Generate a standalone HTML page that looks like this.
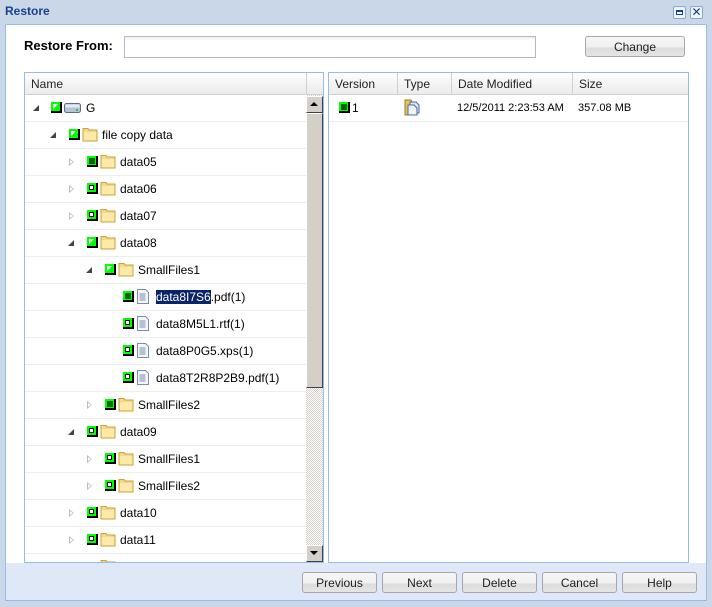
<!DOCTYPE html>
<html><head><meta charset="utf-8"><style>
*{box-sizing:border-box;margin:0;padding:0}
body{width:712px;height:607px;position:relative;background:#c9d7e8;font-family:"Liberation Sans",Tahoma,sans-serif;font-size:12px;overflow:hidden}
.abs{position:absolute}
.title{left:5px;top:4px;font-weight:bold;color:#15428b;font-size:12px}
.frame{left:5px;top:24px;width:702px;height:577px;border:1px solid #99bbe8;background:#fff}
.bottom{left:6px;top:563px;width:700px;height:37px;background:#dfe8f6}
.btn{position:absolute;height:21px;border:1px solid #a7a7a7;border-radius:3px;background:linear-gradient(#f6f6f6 0,#f0f0f0 55%,#dcdcdc 56%,#e4e4e4 100%);text-align:center;line-height:21px;color:#222;font-size:12px}
.input{left:124px;top:36px;width:412px;height:22px;border:1px solid #b5b8c8;background:linear-gradient(#eee,#fff 4px)}
.panel{border:1px solid #99bbe8;background:#fff;overflow:hidden}
.hdr{position:absolute;left:0;top:0;height:22px;background:linear-gradient(#fff,#f2f2f2 60%,#ececec);border-bottom:1px solid #d0d0d0;width:100%}
.hc{position:absolute;top:0;height:22px;line-height:22px;padding-left:6px;border-right:1px solid #d0d0d0;color:#222}
.row{position:absolute;left:0;width:281px;height:27px;border-bottom:1px solid #ededed}
.row span{position:absolute;top:0;line-height:26px;font-size:12px;color:#000;white-space:nowrap}
.arr{position:absolute;width:0;height:0}
.ao{top:9px;border-left:5px solid #bbb;border-top:4px solid transparent;border-bottom:4px solid transparent}
.ao:after{content:"";position:absolute;left:-4px;top:-2px;border-left:3px solid #fff;border-top:2px solid transparent;border-bottom:2px solid transparent}
.ae{top:10px;border-right:6px solid #444;border-top:6px solid transparent}
.cb{position:absolute;top:7px;width:11px;height:11px;background:#000}
.cb i{position:absolute;left:0;top:0;width:9px;height:9px;background:#0f0;display:block}
.cb.f i b{position:absolute;left:2px;top:2px;width:6px;height:6px;background:#006400;display:block}
.cb.e i b{position:absolute;left:2px;top:2px;width:5px;height:5px;background:#fff;border:1px solid #000;display:block}
.cb.h i b{position:absolute;left:2px;top:2px;width:0;height:0;border-top:5px solid #fff;border-right:5px solid transparent;display:block}
.ic{position:absolute;top:5px}
</style></head><body>
<svg width="0" height="0" style="position:absolute"><defs>
<symbol id="fold" viewBox="0 0 17 15"><path d="M1 3V1.5h5l1 1.5h8v11H1z" fill="#f5d889" stroke="#c9a03a"/><path d="M1.5 5h13v8.5h-13z" fill="#fde9a8"/></symbol>
<symbol id="file" viewBox="0 0 12 15"><path d="M.5 .5h8l3 3v11H.5z" fill="#f4f6fb" stroke="#7d8bae"/><path d="M2.5 5h6M2.5 7h6M2.5 9h6M2.5 11h6" stroke="#7d8bae"/></symbol>
</defs></svg>
<div class="abs title">Restore</div>
<div class="abs" style="left:673px;top:6px;width:13px;height:13px;border:1px solid #8aa8cf;background:#eef3fa;border-radius:2px"><div style="position:absolute;left:2px;top:3px;width:7px;height:5px;border:1px solid #15428b;border-top-width:2px"></div></div>
<div class="abs" style="left:690px;top:6px;width:13px;height:13px;border:1px solid #8aa8cf;background:#eef3fa;border-radius:2px;color:#15428b;font-size:12px;line-height:11px;text-align:center">✕</div>
<div class="abs frame"></div>
<div class="abs bottom"></div>
<div class="abs" style="left:24px;top:38px;font-weight:bold;font-size:13px;color:#000">Restore From:</div>
<div class="abs input"></div>
<div class="btn" style="left:585px;top:36px;width:100px">Change</div>

<div class="abs panel" style="left:24px;top:72px;width:300px;height:491px">
 <div class="hdr"><div class="hc" style="left:0;width:282px">Name</div></div>
 <div style="position:absolute;left:0;top:22px;width:300px;height:468px">
  <div class="row" style="top:0"><div class="arr ae" style="left:8px"></div><div class="cb h" style="left:26px"><i><b></b></i></div>
   <svg class="ic" style="left:39px;top:8px" width="17" height="10" viewBox="0 0 17 10"><rect x=".5" y=".5" width="16" height="9" rx="2" fill="#b6c3d8" stroke="#5a6a86"/><rect x="1.5" y="1.5" width="14" height="3" fill="#e4eaf3"/><rect x="12" y="6" width="2" height="2" fill="#2c2"/></svg>
   <span style="left:61px">G</span></div>
  <div class="row" style="top:27px"><div class="arr ae" style="left:25px"></div><div class="cb h" style="left:44px"><i><b></b></i></div><svg class="ic" style="left:57px" width="17" height="15"><use href="#fold"/></svg><span style="left:77px">file copy data</span></div>
  <div class="row" style="top:54px"><div class="arr ao" style="left:44px"></div><div class="cb f" style="left:62px"><i><b></b></i></div><svg class="ic" style="left:75px" width="17" height="15"><use href="#fold"/></svg><span style="left:95px">data05</span></div>
  <div class="row" style="top:81px"><div class="arr ao" style="left:44px"></div><div class="cb e" style="left:62px"><i><b></b></i></div><svg class="ic" style="left:75px" width="17" height="15"><use href="#fold"/></svg><span style="left:95px">data06</span></div>
  <div class="row" style="top:108px"><div class="arr ao" style="left:44px"></div><div class="cb e" style="left:62px"><i><b></b></i></div><svg class="ic" style="left:75px" width="17" height="15"><use href="#fold"/></svg><span style="left:95px">data07</span></div>
  <div class="row" style="top:135px"><div class="arr ae" style="left:43px"></div><div class="cb h" style="left:62px"><i><b></b></i></div><svg class="ic" style="left:75px" width="17" height="15"><use href="#fold"/></svg><span style="left:95px">data08</span></div>
  <div class="row" style="top:162px"><div class="arr ae" style="left:61px"></div><div class="cb h" style="left:80px"><i><b></b></i></div><svg class="ic" style="left:93px" width="17" height="15"><use href="#fold"/></svg><span style="left:113px">SmallFiles1</span></div>
  <div class="row" style="top:189px"><div class="cb f" style="left:98px"><i><b></b></i></div><svg class="ic" style="left:112px" width="12" height="15"><use href="#file"/></svg><span style="left:131px"><b style="font-weight:normal;background:#0a246a;color:#fff">data8I7S6</b>.pdf(1)</span></div>
  <div class="row" style="top:216px"><div class="cb e" style="left:98px"><i><b></b></i></div><svg class="ic" style="left:112px" width="12" height="15"><use href="#file"/></svg><span style="left:131px">data8M5L1.rtf(1)</span></div>
  <div class="row" style="top:243px"><div class="cb e" style="left:98px"><i><b></b></i></div><svg class="ic" style="left:112px" width="12" height="15"><use href="#file"/></svg><span style="left:131px">data8P0G5.xps(1)</span></div>
  <div class="row" style="top:270px"><div class="cb e" style="left:98px"><i><b></b></i></div><svg class="ic" style="left:112px" width="12" height="15"><use href="#file"/></svg><span style="left:131px">data8T2R8P2B9.pdf(1)</span></div>
  <div class="row" style="top:297px"><div class="arr ao" style="left:62px"></div><div class="cb f" style="left:80px"><i><b></b></i></div><svg class="ic" style="left:93px" width="17" height="15"><use href="#fold"/></svg><span style="left:113px">SmallFiles2</span></div>
  <div class="row" style="top:324px"><div class="arr ae" style="left:43px"></div><div class="cb e" style="left:62px"><i><b></b></i></div><svg class="ic" style="left:75px" width="17" height="15"><use href="#fold"/></svg><span style="left:95px">data09</span></div>
  <div class="row" style="top:351px"><div class="arr ao" style="left:62px"></div><div class="cb e" style="left:80px"><i><b></b></i></div><svg class="ic" style="left:93px" width="17" height="15"><use href="#fold"/></svg><span style="left:113px">SmallFiles1</span></div>
  <div class="row" style="top:378px"><div class="arr ao" style="left:62px"></div><div class="cb e" style="left:80px"><i><b></b></i></div><svg class="ic" style="left:93px" width="17" height="15"><use href="#fold"/></svg><span style="left:113px">SmallFiles2</span></div>
  <div class="row" style="top:405px"><div class="arr ao" style="left:44px"></div><div class="cb e" style="left:62px"><i><b></b></i></div><svg class="ic" style="left:75px" width="17" height="15"><use href="#fold"/></svg><span style="left:95px">data10</span></div>
  <div class="row" style="top:432px"><div class="arr ao" style="left:44px"></div><div class="cb e" style="left:62px"><i><b></b></i></div><svg class="ic" style="left:75px" width="17" height="15"><use href="#fold"/></svg><span style="left:95px">data11</span></div>
  <div class="row" style="top:459px;border:none"><svg class="ic" style="left:75px" width="17" height="15"><use href="#fold"/></svg></div>
 </div>
 <div style="position:absolute;left:281px;top:22px;width:17px;height:467px;background:repeating-conic-gradient(#d4d0c8 0 25%,#fff 0 50%) 0 0/2px 2px"></div>
 <div style="position:absolute;left:281px;top:23px;width:17px;height:17px;background:#d4d0c8;border:1px solid;border-color:#fff #404040 #404040 #fff"><div style="position:absolute;left:3px;top:5px;border-bottom:4px solid #000;border-left:4px solid transparent;border-right:4px solid transparent"></div></div>
 <div style="position:absolute;left:281px;top:40px;width:17px;height:275px;background:#d4d0c8;border:1px solid;border-color:#fff #404040 #404040 #fff"></div>
 <div style="position:absolute;left:281px;top:472px;width:17px;height:17px;background:#d4d0c8;border:1px solid;border-color:#fff #404040 #404040 #fff"><div style="position:absolute;left:3px;top:5px;border-top:4px solid #000;border-left:4px solid transparent;border-right:4px solid transparent"></div></div>
</div>

<div class="abs panel" style="left:328px;top:72px;width:361px;height:491px">
 <div class="hdr">
  <div class="hc" style="left:0;width:69px">Version</div>
  <div class="hc" style="left:69px;width:54px">Type</div>
  <div class="hc" style="left:123px;width:121px">Date Modified</div>
  <div class="hc" style="left:244px;width:116px;border-right:none">Size</div>
 </div>
 <div style="position:absolute;left:0;top:22px;width:361px;height:27px;border-bottom:1px solid #ededed">
  <div class="cb f" style="left:10px"><i><b></b></i></div>
  <span style="position:absolute;left:23px;top:0;line-height:27px">1</span>
  <svg class="ic" style="left:75px;top:4px" width="17" height="17" viewBox="0 0 17 17"><path d="M1 1h6l1 2v13H1z" fill="#e8c45a" stroke="#a07820"/><path d="M6 3h6l3 3v8H6z" fill="#dbe6f5" stroke="#4a6aa0"/><path d="M4 6h6l3 3v7H4z" fill="#eef3fb" stroke="#4a6aa0"/></svg>
  <span style="position:absolute;left:128px;top:0;line-height:27px;font-size:11px">12/5/2011 2:23:53 AM</span>
  <span style="position:absolute;left:249px;top:0;line-height:27px;font-size:11px">357.08 MB</span>
 </div>
</div>

<div class="btn" style="left:302px;top:572px;width:75px">Previous</div>
<div class="btn" style="left:382px;top:572px;width:75px">Next</div>
<div class="btn" style="left:462px;top:572px;width:75px">Delete</div>
<div class="btn" style="left:542px;top:572px;width:75px">Cancel</div>
<div class="btn" style="left:622px;top:572px;width:75px">Help</div>
</body></html>
